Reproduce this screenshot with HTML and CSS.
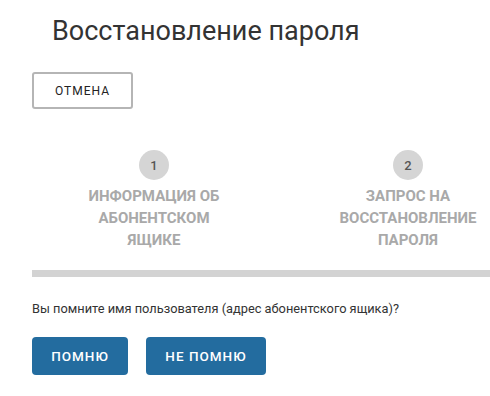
FILE: index.html
```html
<!DOCTYPE html>
<html lang="ru">
<head>
<meta charset="utf-8">
<title>Восстановление пароля</title>
<link rel="stylesheet" href="styles.css">
</head>
<body>
<div class="page">
  <h1 class="title">Восстановление пароля</h1>
  <button class="btn-cancel">ОТМЕНА</button>
  <div class="steps">
    <div class="step">
      <div class="step-num">1</div>
      <div class="step-label">ИНФОРМАЦИЯ ОБ<br>АБОНЕНТСКОМ<br>ЯЩИКЕ</div>
    </div>
    <div class="step step-second">
      <div class="step-num">2</div>
      <div class="step-label">ЗАПРОС НА<br>ВОССТАНОВЛЕНИЕ<br>ПАРОЛЯ</div>
    </div>
  </div>
  <div class="progress"></div>
  <p class="question">Вы помните имя пользователя (адрес абонентского ящика)?</p>
  <div class="actions">
    <button class="btn-primary btn-yes">ПОМНЮ</button>
    <button class="btn-primary btn-no">НЕ ПОМНЮ</button>
  </div>
</div>
</body>
</html>
```
FILE: styles.css
```css
html, body {
  margin: 0;
  padding: 0;
  background: #fff;
  overflow: hidden;
}
body {
  font-family: Roboto, "Noto Sans", "Liberation Sans", sans-serif;
  color: #333;
}
.page {
  padding-left: 32px;
}
.title {
  margin: 14px 0 0 20px;
  font-size: 27px;
  line-height: 34px;
  font-weight: 400;
  color: #333;
}
.btn-cancel {
  display: block;
  margin-top: 24px;
  width: 101px;
  height: 37px;
  background: #fff;
  border: 2px solid #b5b5b5;
  border-radius: 3px;
  font-family: inherit;
  font-size: 12px;
  letter-spacing: 1px;
  color: #222;
  padding: 0;
}
.steps {
  display: grid;
  grid-template-columns: 254px 1fr;
  margin-left: -5px;
  margin-top: 41px;
}
.step {
  display: flex;
  flex-direction: column;
  align-items: center;
}
.step-second {
  padding-left: 45px;
}
.step-num {
  width: 30px;
  height: 30px;
  border-radius: 50%;
  background: #d5d5d5;
  color: #555;
  font-size: 13px;
  font-weight: 500;
  display: flex;
  align-items: center;
  justify-content: center;
}
.step-label {
  margin-top: 5px;
  font-size: 15px;
  line-height: 22px;
  font-weight: 700;
  color: #a9a9a9;
  text-align: center;
}
.progress {
  margin-top: 19px;
  height: 7px;
  background: #d3d3d3;
}
.question {
  margin: 23px 0 0;
  font-size: 12.8px;
  line-height: 18px;
  color: #333;
}
.actions {
  display: flex;
  gap: 18px;
  margin-top: 19px;
}
.btn-primary {
  height: 38px;
  border: 0;
  border-radius: 4px;
  background: #236c9f;
  color: #fff;
  font-family: inherit;
  font-size: 13.5px;
  font-weight: 500;
  letter-spacing: 1px;
  padding: 0;
}
.btn-yes { width: 96px; }
.btn-no { width: 120px; }
```
